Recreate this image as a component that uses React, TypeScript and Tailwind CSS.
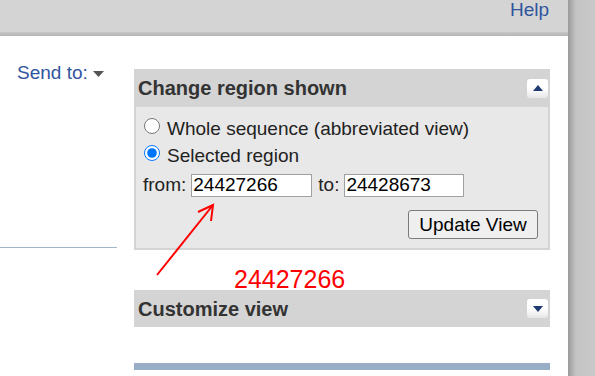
import React from "react";

const font = { fontFamily: '"Liberation Sans", Arial, sans-serif' };

function Toggle({ up }: { up: boolean }) {
  return (
    <div className="w-[21px] h-[19px] rounded-[3px] bg-gradient-to-b from-white via-white to-[#e6e6e6] flex items-center justify-center mr-[2px]">
      <svg width="10" height="6" viewBox="0 0 10 6">
        {up ? (
          <polygon points="5,0 10,6 0,6" fill="#1f3a70" />
        ) : (
          <polygon points="0,0 10,0 5,6" fill="#1f3a70" />
        )}
      </svg>
    </div>
  );
}

export default function App() {
  return (
    <div className="relative w-[595px] h-[376px] overflow-hidden bg-white flex" style={font}>
      <div className="w-[568px] flex flex-col">
        <div className="h-[36px] shrink-0 flex flex-col">
          <div className="h-[32px] bg-[#d4d4d4] flex justify-end pr-[19px]">
            <span className="text-[19px] leading-[20px] text-[#30549e]">Help</span>
          </div>
          <div className="h-[4px] bg-gradient-to-b from-[#c8c8c8] to-[#b4b4b4]" />
        </div>
        <div className="flex flex-1">
          <div className="w-[134px] shrink-0 flex flex-col">
            <div className="mt-[26.5px] ml-[17px] flex items-center">
              <span className="text-[19px] leading-none text-[#30549e]">Send to:</span>
              <svg className="ml-[5px] mt-[3px]" width="11" height="6" viewBox="0 0 11 6">
                <polygon points="0,0 11,0 5.5,6" fill="#555" />
              </svg>
            </div>
            <div className="mt-[165.5px] w-[117px] h-px bg-[#a3b5c8]" />
          </div>
          <div className="w-[416px] shrink-0 flex flex-col">
            <div className="mt-[33px]">
              <div className="h-[38px] bg-[#d4d4d4] flex items-center justify-between pl-[4px]">
                <span className="text-[20px] leading-none font-bold text-[#333]">Change region shown</span>
                <Toggle up />
              </div>
              <div className="bg-[#e8e8e8] border-2 border-t-0 border-[#d4d4d4] pt-[7.5px] pb-[9px] pr-[10px] text-[19px] text-[#222]">
                <label className="flex items-start h-[27px] leading-[27px] pl-[8px]">
                  <input type="radio" name="r" className="w-4 h-4 m-0 mt-[3.5px] accent-[#0075ff]" />
                  <span className="ml-[7px]">Whole sequence (abbreviated view)</span>
                </label>
                <label className="flex items-start h-[27px] leading-[27px] pl-[8px]">
                  <input type="radio" name="r" defaultChecked className="w-4 h-4 m-0 mt-[3.5px] accent-[#0075ff]" />
                  <span className="ml-[7px]">Selected region</span>
                </label>
                <div className="flex items-center h-[27px] mt-[3px] pl-[7px]">
                  <span>from:</span>
                  <input
                    readOnly
                    value="24427266"
                    className="ml-[5px] w-[121px] h-[23px] border border-[#a0a0a0] bg-white pl-[1px] text-[19px] text-black outline-none"
                    style={font}
                  />
                  <span className="ml-[6px]">to:</span>
                  <input
                    readOnly
                    value="24428673"
                    className="ml-[5px] w-[120px] h-[23px] border border-[#a0a0a0] bg-white pl-[1px] text-[19px] text-black outline-none"
                    style={font}
                  />
                </div>
                <div className="flex justify-end mt-[11.5px]">
                  <button
                    className="w-[130px] h-[29px] border border-[#7a7a7a] rounded-[3px] bg-[#efefef] text-[19px] text-black leading-none"
                    style={font}
                  >
                    Update View
                  </button>
                </div>
              </div>
            </div>
            <div className="mt-[40px] h-[37px] bg-[#d4d4d4] flex items-center justify-between pl-[4px]">
              <span className="text-[20px] leading-none font-bold text-[#333]">Customize view</span>
              <Toggle up={false} />
            </div>
            <div className="mt-[36px] h-[7px] bg-[#98aec6]" />
          </div>
        </div>
      </div>
      <div className="w-[27px] h-full bg-gradient-to-r from-[#9a9a9a] via-[#c4c4c4] via-30% to-[#c9c9c9]" />

      <span className="absolute left-[234px] top-[267px] text-[25px] leading-none text-[#ff0000]">24427266</span>
      <svg className="absolute left-0 top-0 pointer-events-none" width="595" height="376">
        <line x1="157" y1="275" x2="213" y2="205" stroke="#ff0000" strokeWidth="2" />
        <polyline points="198,212 213,205 211,221" fill="none" stroke="#ff0000" strokeWidth="2" />
      </svg>
    </div>
  );
}
